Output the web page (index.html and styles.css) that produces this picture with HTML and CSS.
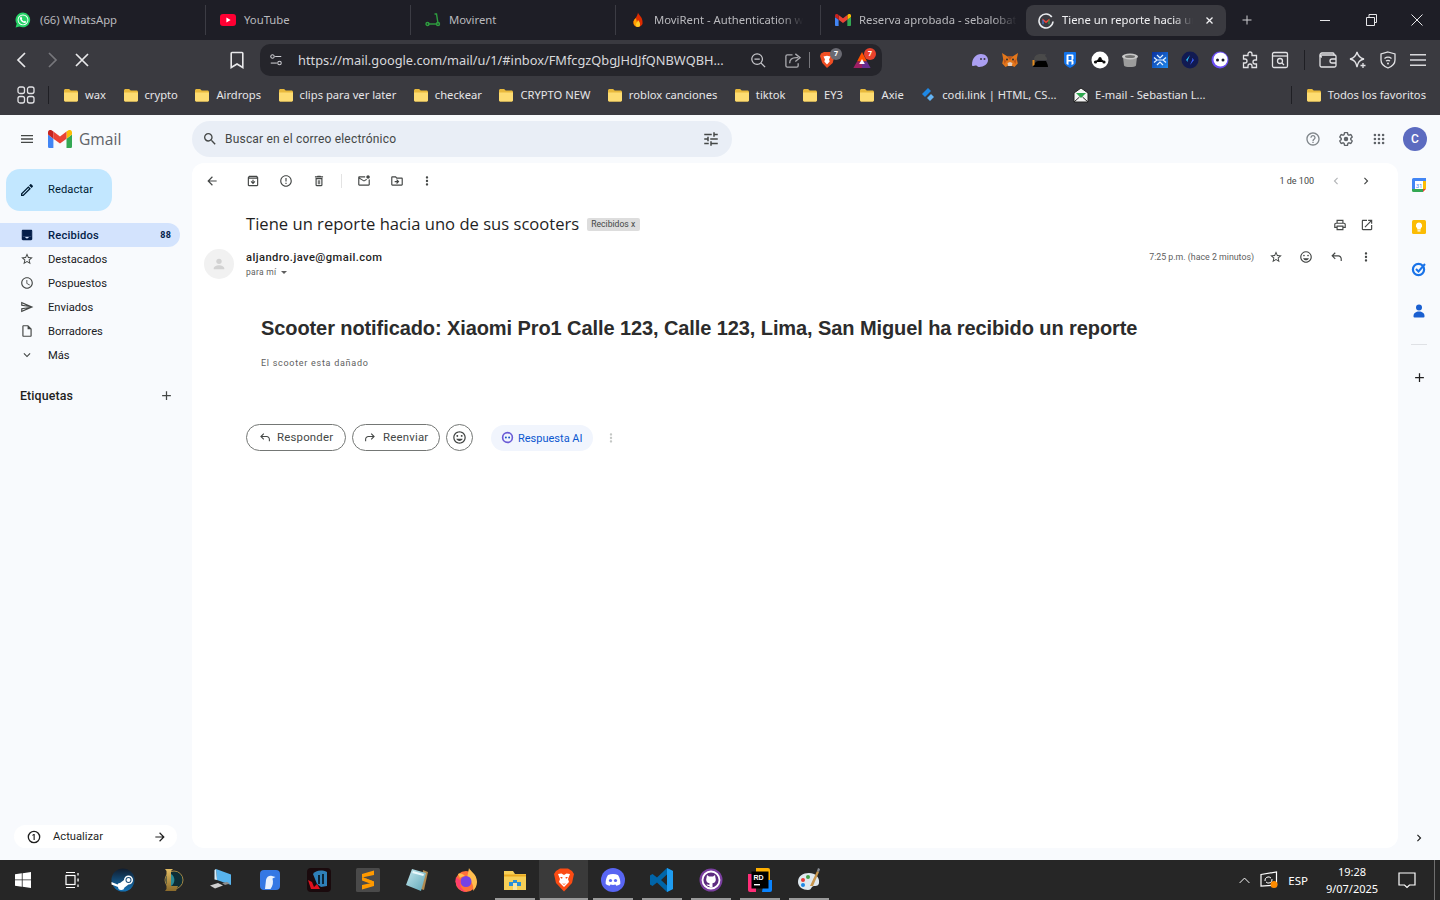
FILE: index.html
```html
<!DOCTYPE html>
<html lang="es">
<head>
    <meta charset="UTF-8">
    <meta name="viewport" content="width=device-width, initial-scale=1.0">
    <title>Tiene un reporte hacia uno de sus scooters - Gmail</title>
    <link rel="stylesheet" href="styles.css">
</head>
<body>
    <svg class="sprite" xmlns="http://www.w3.org/2000/svg">
        <defs>
            <linearGradient id="g-steam" x1="0" y1="0" x2="0" y2="1"><stop offset="0" stop-color="#111d2e"/><stop offset="1" stop-color="#1474b8"/></linearGradient>
            <linearGradient id="g-note" x1="0" y1="0" x2="1" y2="1"><stop offset="0" stop-color="#c5e8ee"/><stop offset="1" stop-color="#5ea7b8"/></linearGradient>
            <linearGradient id="g-blue" x1="0" y1="0" x2="1" y2="1"><stop offset="0" stop-color="#0a2f9c"/><stop offset="1" stop-color="#1f8bf0"/></linearGradient>
            <linearGradient id="g-lol" x1="0" y1="0" x2="0" y2="1"><stop offset="0" stop-color="#e4bd63"/><stop offset="1" stop-color="#8a6a2a"/></linearGradient>
        </defs>
        <symbol id="i-menu" viewBox="0 0 24 24"><path d="M3 18h18v-2H3v2zm0-5h18v-2H3v2zm0-7v2h18V6H3z"/></symbol>
        <symbol id="i-search" viewBox="0 0 24 24"><path d="M15.5 14h-.79l-.28-.27A6.471 6.471 0 0 0 16 9.5 6.5 6.5 0 1 0 9.5 16c1.61 0 3.09-.59 4.23-1.57l.27.28v.79l5 4.99L20.49 19l-4.99-5zm-6 0C7.01 14 5 11.99 5 9.5S7.01 5 9.5 5 14 7.01 14 9.5 11.99 14 9.5 14z"/></symbol>
        <symbol id="i-tune" viewBox="0 0 24 24"><path d="M3 17v2h6v-2H3zM3 5v2h10V5H3zm10 16v-2h8v-2h-8v-2h-2v6h2zM7 9v2H3v2h4v2h2V9H7zm14 4v-2H11v2h10zm-6-4h2V7h4V5h-4V3h-2v6z"/></symbol>
        <symbol id="i-help" viewBox="0 0 24 24"><path d="M11 18h2v-2h-2v2zm1-16C6.48 2 2 6.48 2 12s4.48 10 10 10 10-4.48 10-10S17.52 2 12 2zm0 18c-4.41 0-8-3.59-8-8s3.59-8 8-8 8 3.59 8 8-3.59 8-8 8zm0-14c-2.21 0-4 1.79-4 4h2c0-1.1.9-2 2-2s2 .9 2 2c0 2-3 1.75-3 5h2c0-2.25 3-2.5 3-5 0-2.21-1.79-4-4-4z"/></symbol>
        <symbol id="i-gear" viewBox="0 0 24 24"><path fill="none" stroke="currentColor" stroke-width="2" d="M19.14 12.94c.04-.3.06-.61.06-.94 0-.32-.02-.64-.07-.94l2.03-1.58a.49.49 0 0 0 .12-.61l-1.92-3.32a.488.488 0 0 0-.59-.22l-2.39.96c-.5-.38-1.03-.7-1.62-.94l-.36-2.54a.484.484 0 0 0-.48-.41h-3.84c-.24 0-.43.17-.47.41l-.36 2.54c-.59.24-1.13.57-1.62.94l-2.39-.96c-.22-.08-.47 0-.59.22L2.74 8.87c-.12.21-.08.47.12.61l2.03 1.58c-.05.3-.09.63-.09.94s.02.64.07.94l-2.03 1.58a.49.49 0 0 0-.12.61l1.92 3.32c.12.22.37.29.59.22l2.39-.96c.5.38 1.03.7 1.62.94l.36 2.54c.05.24.24.41.48.41h3.84c.24 0 .44-.17.47-.41l.36-2.54c.59-.24 1.13-.56 1.62-.94l2.39.96c.22.08.47 0 .59-.22l1.92-3.32c.12-.22.07-.47-.12-.61l-2.01-1.58z"/><circle cx="12" cy="12" r="3.4"/></symbol>
        <symbol id="i-apps" viewBox="0 0 24 24"><circle cx="5" cy="5" r="2.2"/><circle cx="12" cy="5" r="2.2"/><circle cx="19" cy="5" r="2.2"/><circle cx="5" cy="12" r="2.2"/><circle cx="12" cy="12" r="2.2"/><circle cx="19" cy="12" r="2.2"/><circle cx="5" cy="19" r="2.2"/><circle cx="12" cy="19" r="2.2"/><circle cx="19" cy="19" r="2.2"/></symbol>
        <symbol id="i-back" viewBox="0 0 24 24"><path d="M20 11H7.83l5.59-5.59L12 4l-8 8 8 8 1.41-1.41L7.83 13H20v-2z"/></symbol>
        <symbol id="i-forward" viewBox="0 0 24 24"><path d="M4 11h12.17l-5.59-5.59L12 4l8 8-8 8-1.41-1.41L16.17 13H4v-2z"/></symbol>
        <symbol id="i-archive" viewBox="0 0 24 24"><path d="M20.54 5.23l-1.39-1.68C18.88 3.21 18.47 3 18 3H6c-.47 0-.88.21-1.16.55L3.46 5.23C3.17 5.57 3 6.02 3 6.5V19c0 1.1.9 2 2 2h14c1.1 0 2-.9 2-2V6.5c0-.48-.17-.93-.46-1.27zM6.24 5h11.52l.83 1H5.42l.82-1zM5 19V8h14v11H5zm11-5.5l-4 4-4-4 1.41-1.41L11 13.67V10h2v3.67l1.59-1.59L16 13.5z"/></symbol>
        <symbol id="i-report" viewBox="0 0 24 24"><path d="M11 15h2v2h-2zm0-8h2v6h-2zm.99-5C6.47 2 2 6.48 2 12s4.47 10 9.99 10C17.52 22 22 17.52 22 12S17.52 2 11.99 2zM12 20c-4.42 0-8-3.58-8-8s3.58-8 8-8 8 3.58 8 8-3.58 8-8 8z"/></symbol>
        <symbol id="i-delete" viewBox="0 0 24 24"><path d="M6 19c0 1.1.9 2 2 2h8c1.1 0 2-.9 2-2V7H6v12zM8 9h8v10H8V9zm7.5-5l-1-1h-5l-1 1H5v2h14V4h-3.500z"/><path d="M10 10.500h1.500v7H10zM12.500 10.500H14v7h-1.500z"/></symbol>
        <symbol id="i-unread" viewBox="0 0 24 24"><path d="M22 8.98V18c0 1.1-.9 2-2 2H4c-1.1 0-2-.9-2-2V6c0-1.1.9-2 2-2h10.1c-.06.32-.1.66-.1 1 0 .34.04.68.1 1H4l8 5 3.67-2.29c.47.43 1.02.76 1.63.98L12 13 4 8v10h16V9.9c.74-.15 1.42-.48 2-.92zM16 5c0 1.66 1.34 3 3 3s3-1.34 3-3-1.34-3-3-3-3 1.34-3 3z"/></symbol>
        <symbol id="i-move" viewBox="0 0 24 24"><path d="M20 6h-8l-2-2H4c-1.11 0-1.99.89-1.99 2L2 18c0 1.11.89 2 2 2h16c1.11 0 2-.89 2-2V8c0-1.11-.89-2-2-2zm0 12H4V6h5.17l2 2H20v10zm-8.01-9l-1.41 1.41L12.16 12H8v2h4.16l-1.59 1.59L11.99 17 16 13.01 11.99 9z"/></symbol>
        <symbol id="i-more" viewBox="0 0 24 24"><path d="M12 8c1.1 0 2-.9 2-2s-.9-2-2-2-2 .9-2 2 .9 2 2 2zm0 2c-1.1 0-2 .9-2 2s.9 2 2 2 2-.9 2-2-.9-2-2-2zm0 6c-1.1 0-2 .9-2 2s.9 2 2 2 2-.9 2-2-.9-2-2-2z"/></symbol>
        <symbol id="i-left" viewBox="0 0 24 24"><path d="M15.41 7.41L14 6l-6 6 6 6 1.41-1.41L10.83 12z"/></symbol>
        <symbol id="i-right" viewBox="0 0 24 24"><path d="M10 6L8.59 7.41 13.17 12l-4.58 4.59L10 18l6-6z"/></symbol>
        <symbol id="i-print" viewBox="0 0 24 24"><path d="M19 8h-1V3H6v5H5c-1.66 0-3 1.34-3 3v6h4v4h12v-4h4v-6c0-1.66-1.34-3-3-3zM8 5h8v3H8V5zm8 12v2H8v-4h8v2zm2-2v-2H6v2H4v-4c0-.55.45-1 1-1h14c.55 0 1 .45 1 1v4h-2z"/></symbol>
        <symbol id="i-open" viewBox="0 0 24 24"><path d="M19 19H5V5h7V3H5c-1.11 0-2 .9-2 2v14c0 1.1.89 2 2 2h14c1.1 0 2-.9 2-2v-7h-2v7zM14 3v2h3.59l-9.83 9.83 1.41 1.41L19 6.41V10h2V3h-7z"/></symbol>
        <symbol id="i-star" viewBox="0 0 24 24"><path d="M22 9.24l-7.19-.62L12 2 9.19 8.63 2 9.24l5.46 4.73L5.82 21 12 17.27 18.18 21l-1.63-7.03L22 9.24zM12 15.4l-3.76 2.27 1-4.28-3.32-2.88 4.38-.38L12 6.1l1.71 4.04 4.38.38-3.32 2.88 1 4.28L12 15.4z"/></symbol>
        <symbol id="i-emoji" viewBox="0 0 24 24"><path d="M11.99 2C6.47 2 2 6.48 2 12s4.47 10 9.99 10C17.52 22 22 17.52 22 12S17.52 2 11.99 2zM12 20c-4.42 0-8-3.58-8-8s3.58-8 8-8 8 3.58 8 8-3.58 8-8 8zm3.5-9c.83 0 1.5-.67 1.5-1.5S16.33 8 15.5 8 14 8.67 14 9.5s.67 1.5 1.5 1.5zm-7 0c.83 0 1.5-.67 1.5-1.5S9.33 8 8.5 8 7 8.67 7 9.5 7.67 11 8.5 11zm3.5 6.5c2.33 0 4.31-1.46 5.11-3.5H6.89c.8 2.04 2.78 3.5 5.11 3.5z"/></symbol>
        <symbol id="i-reply" viewBox="0 0 24 24"><path d="M20 19v-4c0-2.21-1.79-4-4-4H7.83l3.59 3.59L10 16l-6-6 6-6 1.41 1.41L7.83 9H16c3.31 0 6 2.69 6 6v4h-2z"/></symbol>
        <symbol id="i-fwd" viewBox="0 0 24 24"><path d="M4 19v-4c0-2.21 1.79-4 4-4h8.17l-3.59 3.59L14 16l6-6-6-6-1.41 1.41L16.17 9H8c-3.31 0-6 2.69-6 6v4h2z"/></symbol>
        <symbol id="i-inbox" viewBox="0 0 24 24"><path d="M19 3H5c-1.1 0-2 .9-2 2v14c0 1.1.9 2 2 2h14c1.1 0 2-.9 2-2V5c0-1.1-.9-2-2-2zm0 12h-4c0 1.66-1.35 3-3 3s-3-1.34-3-3H5V5h14v10z"/><rect x="5" y="5" width="14" height="10"/></symbol>
        <symbol id="i-clock" viewBox="0 0 24 24"><path d="M11.99 2C6.47 2 2 6.48 2 12s4.47 10 9.99 10C17.52 22 22 17.52 22 12S17.52 2 11.99 2zM12 20c-4.42 0-8-3.58-8-8s3.58-8 8-8 8 3.58 8 8-3.58 8-8 8zm.5-13H11v6l5.25 3.15.75-1.23-4.5-2.67z"/></symbol>
        <symbol id="i-send" viewBox="0 0 24 24"><path d="M4.01 6.03l7.51 3.22-7.52-1 .01-2.22m7.5 8.72L4 17.97v-2.22l7.51-1M2.01 3L2 10l15 2-15 2 .01 7L23 12 2.01 3z"/></symbol>
        <symbol id="i-draft" viewBox="0 0 24 24"><path d="M14 2H6c-1.1 0-1.99.9-1.99 2L4 20c0 1.1.89 2 1.99 2H18c1.1 0 2-.9 2-2V8l-6-6zM6 20V4h7v5h5v11H6z"/></symbol>
        <symbol id="i-expand" viewBox="0 0 24 24"><path d="M16.59 8.59L12 13.17 7.41 8.59 6 10l6 6 6-6z"/></symbol>
        <symbol id="i-add" viewBox="0 0 24 24"><path d="M19 13h-6v6h-2v-6H5v-2h6V5h2v6h6v2z"/></symbol>
        <symbol id="i-edit" viewBox="0 0 24 24"><path d="M3 17.25V21h3.75L17.81 9.94l-3.75-3.75L3 17.25zM5.92 19H5v-.92l9.06-9.06.92.92L5.92 19zM20.71 5.63l-2.34-2.34c-.39-.39-1.02-.39-1.41 0l-1.83 1.83 3.75 3.75 1.83-1.83c.39-.39.39-1.02 0-1.41z"/></symbol>
        <symbol id="i-gmail" viewBox="0 0 24 18"><path fill="#4285f4" d="M1.6 18h3.8V8.7L0 4.6v11.8C0 17.3.7 18 1.6 18z"/><path fill="#34a853" d="M18.5 18h3.9c.9 0 1.6-.7 1.6-1.6V4.6l-5.5 4.1z"/><path fill="#fbbc04" d="M18.5 1.6v7.1L24 4.6V2.4c0-2-2.3-3.2-3.9-2z"/><path fill="#ea4335" d="M5.4 8.7V1.6L12 6.5l6.5-5v7.2L12 13.6z"/><path fill="#c5221f" d="M0 2.4v2.2l5.4 4.1V1.6L3.9.4C2.3-.8 0 .4 0 2.4z"/></symbol>
        <symbol id="i-folder" viewBox="0 0 16 16"><path fill="#e8b93c" d="M1 3.500C1 2.700 1.700 2 2.500 2h3.600l1.600 1.600h5.800c.8 0 1.500.7 1.500 1.500V13c0 .8-.7 1.500-1.500 1.500h-11C1.700 14.500 1 13.800 1 13z"/><path fill="#fddc72" d="M1 5.500h14V13c0 .8-.7 1.500-1.500 1.500h-11C1.700 14.500 1 13.800 1 13z"/></symbol>
    </svg>

    <!-- pestañas del navegador -->
    <div class="tabstrip">
        <div class="tab">
            <svg class="tab-icon" viewBox="0 0 16 16"><path fill="#25d366" d="M8 .5a7.400 7.400 0 0 0-6.300 11.300L.6 15.500l3.800-1A7.400 7.400 0 1 0 8 .5z"/><circle cx="8" cy="7.900" r="5.400" fill="#fff"/><circle cx="8" cy="7.900" r="4.500" fill="#25d366"/><path fill="#fff" d="M6 4.800c.4 0 .6.100.7.400l.5 1.200-.5.800c.5 1 1.300 1.700 2.300 2.200l.8-.6 1.200.6c.2.100.2.400.1.800-.3.600-1 .9-1.600.8-2.300-.4-4-2.100-4.500-4.300-.1-.9.300-1.800 1-1.900z"/></svg>
            <span class="tab-title">(66) WhatsApp</span>
        </div>
        <div class="tab">
            <svg class="tab-icon" viewBox="0 0 16 16"><rect y="2" width="16" height="12" rx="3" fill="#ff0033"/><path fill="#fff" d="M6.400 5.500 10.600 8l-4.200 2.500z"/></svg>
            <span class="tab-title">YouTube</span>
        </div>
        <div class="tab">
            <svg class="tab-icon" viewBox="0 0 16 16"><g fill="none" stroke="#2e9e3f" stroke-width="1.400"><path d="M9.500 2h2l1.500 9.500"/><path d="M3 12h8"/><circle cx="2.500" cy="12" r="1.500"/><circle cx="13" cy="12" r="1.500"/></g></svg>
            <span class="tab-title">Movirent</span>
        </div>
        <div class="tab">
            <svg class="tab-icon" viewBox="0 0 16 16"><path fill="#dd2c00" d="M8 .5c.5 2.500 4.500 4.500 4.500 9A4.500 4.500 0 0 1 8 15a4.500 4.500 0 0 1-4.500-5.500C3.800 7.500 7.500 5 8 .5z"/><path fill="#ffa000" d="M3.600 9.200C4 7.800 5 6.800 6 6l2 9a4.400 4.400 0 0 1-4.500-4.500z"/><path fill="#ffca28" d="M8 8c1 1.500 2.200 2.600 2 4.300A2.200 2.200 0 0 1 8 15a2.300 2.300 0 0 1-2-2.700C6.200 10.800 7.500 9.800 8 8z"/></svg>
            <span class="tab-title tab-fade">MoviRent - Authentication w</span>
        </div>
        <div class="tab">
            <svg class="tab-icon tab-icon-m"><use href="#i-gmail"/></svg>
            <span class="tab-title tab-fade">Reserva aprobada - sebalobat</span>
        </div>
        <div class="tab tab-active">
            <svg class="tab-icon" viewBox="0 0 16 16"><path fill="none" stroke="#e8eaed" stroke-width="1.600" d="M13.800 4A7 7 0 1 0 15 8.500"/><path fill="#ea4335" d="M4.500 5.500 8 8.200l3.500-2.700v2L8 10.200 4.500 7.500z"/><path fill="#4285f4" d="M4.500 6.500l1 .8v3.900h-1z"/><path fill="#34a853" d="M10.500 7.300l1-.8v4.700h-1z"/></svg>
            <span class="tab-title tab-fade">Tiene un reporte hacia ur</span>
            <svg class="tab-close" viewBox="0 0 24 24"><path fill="none" stroke="currentColor" stroke-width="3.500" d="M4 4l16 16M20 4 4 20"/></svg>
        </div>
        <svg class="new-tab" viewBox="0 0 24 24"><path fill="none" stroke="currentColor" stroke-width="2" d="M12 3v18M3 12h18"/></svg>
        <div class="win-controls">
            <svg class="win-btn" viewBox="0 0 16 16"><path fill="none" stroke="currentColor" d="M3 8.500h10"/></svg>
            <svg class="win-btn" viewBox="0 0 16 16"><path fill="none" stroke="currentColor" d="M3.500 5.500h8v8h-8zM6 5.500v-3h7.500v8h-2"/></svg>
            <svg class="win-btn" viewBox="0 0 16 16"><path fill="none" stroke="currentColor" d="M2.500 2.500l11 11M13.500 2.500l-11 11"/></svg>
        </div>
    </div>

    <!-- barra de dirección -->
    <div class="toolbar">
        <svg class="nav-btn" viewBox="0 0 20 20"><path fill="none" stroke="#e8e8ea" stroke-width="1.700" d="M13 3 6 10l7 7"/></svg>
        <svg class="nav-btn" viewBox="0 0 20 20"><path fill="none" stroke="#77777c" stroke-width="1.700" d="M7 3l7 7-7 7"/></svg>
        <svg class="nav-btn" viewBox="0 0 20 20"><path fill="none" stroke="#e8e8ea" stroke-width="1.700" d="M4 4l12 12M16 4 4 16"/></svg>
        <svg class="nav-btn bookmark-btn" viewBox="0 0 20 20"><path fill="none" stroke="#e8e8ea" stroke-width="1.600" d="M5 2.500h10a.8.8 0 0 1 .8.8v14.200L10 14l-5.800 3.500V3.300a.8.8 0 0 1 .8-.8z"/></svg>
        <div class="urlbar">
            <svg class="url-tune" viewBox="0 0 16 16"><g fill="none" stroke="#cfcfd4" stroke-width="1.200"><circle cx="4" cy="4" r="2"/><path d="M7 4h7"/><circle cx="12" cy="11.500" r="2"/><path d="M2 11.500h7"/></g></svg>
            <span class="url-text">https://mail.google.com/mail/u/1/#inbox/FMfcgzQbgJHdJfQNBWQBH...</span>
            <svg class="url-zoom" viewBox="0 0 18 18"><g fill="none" stroke="#c6c6cb" stroke-width="1.400"><circle cx="8" cy="8" r="6"/><path d="M12.500 12.500 17 17M5 8h6"/></g></svg>
            <svg class="url-share" viewBox="0 0 18 18"><g fill="none" stroke="#a9a9ae" stroke-width="1.400"><path d="M9 3H3.500A1.500 1.500 0 0 0 2 4.500v10A1.500 1.500 0 0 0 3.500 16h10a1.500 1.500 0 0 0 1.500-1.500V12"/><path d="M6 12c0-4 3-6 7-6h2M12 2l5 4-5 4"/></g></svg>
            <span class="url-sep"></span>
            <span class="shield-wrap">
                <svg class="shield" viewBox="0 0 16 18"><path fill="#f04e23" d="M2 2.500 5 1h6l3 1.500 1.500 2.500-1.800 7L8 17l-4.700-5L1 5z"/><path fill="#fff" d="M4.500 5.500 8 4.800l3.500.7-1.500 3 .7 2L8 13.500l-2.700-3 .7-2z"/></svg>
                <span class="ext-badge badge-gray">7</span>
            </span>
            <span class="shield-wrap shield-wrap-last">
                <svg class="shield" viewBox="0 0 18 18"><path fill="#ff5000" d="M9 1 14 10.500H4z"/><path fill="#9e1f63" d="M4 10.500H9V17H.4z"/><path fill="#662d91" d="M14 10.500H9V17h8.600z"/><path fill="#fff" d="M9 8l2.800 5H6.200z"/></svg>
                <span class="ext-badge badge-red">7</span>
            </span>
        </div>
        <div class="extensions">
            <svg class="ext" viewBox="0 0 18 18"><path fill="#ab9ff2" d="M1 14C1 7 5 3 10 3c4.500 0 7 3 7 6 0 4-4 7-9 7-2 0-1.500-2-3.500-1.500C3 15 1 15.500 1 14z"/><circle cx="10" cy="8" r="1" fill="#3a3a40"/><circle cx="13.500" cy="8" r="1" fill="#3a3a40"/></svg>
            <svg class="ext" viewBox="0 0 18 18"><path fill="#e2761b" d="M1 2l5.500 3.500h5L17 2l-1.200 6 1 4.500L13.500 16l-2-1h-5l-2 1-3.300-3.500 1-4.500z"/><path fill="#c0561a" d="M6.500 5.500 9 9l2.500-3.500zM2.500 8l3 2-2 3zM15.500 8l-3 2 2 3z"/><path fill="#e4cdbd" d="M6.500 12 9 11l2.500 1-.7 3H7.200z"/><circle cx="6" cy="8.500" r="1" fill="#2f2f33"/><circle cx="12" cy="8.500" r="1" fill="#2f2f33"/></svg>
            <svg class="ext" viewBox="0 0 18 18"><path fill="#4a4a4a" d="M3 9c0-4 3-6 6-6 2 0 4 .5 6 0l-1 2c2 1 2 3 2 4z"/><path fill="#000" d="M2 16c1-3 3-6 5-6l8 0c1 2 2 4 2 6z"/><path fill="#e08a1e" d="M1.500 9h2v5l-2 1z"/></svg>
            <svg class="ext" viewBox="0 0 18 18"><path fill="#1273ea" d="M4 1h10a1 1 0 0 1 1 1v9c0 2-2 4-6 6-4-2-6-4-6-6V2a1 1 0 0 1 1-1z"/><path fill="#fff" d="M6.500 3.500h5a1 1 0 0 1 1 1V8l-1 1 1 1v3l-2 1v-3.500h-3V14l-2-1V4.500a1 1 0 0 1 1-1zm1 1.500v1.500V9h3V5z"/></svg>
            <svg class="ext" viewBox="0 0 18 18"><circle cx="9" cy="9" r="8.500" fill="#fff"/><circle cx="4.500" cy="11" r="1.600" fill="#111"/><circle cx="9" cy="7.500" r="1.600" fill="#111"/><circle cx="13" cy="11" r="1.600" fill="#111"/><path stroke="#111" stroke-width="1.200" d="M4.500 11 9 7.500 13 11"/></svg>
            <svg class="ext" viewBox="0 0 18 18"><path fill="#9c9c9c" d="M2 6c2 2 12 2 14 0l-1 8.500c-1 2-11 2-12 0z"/><ellipse cx="9" cy="5.500" rx="8" ry="3" fill="#c8c8c8"/><ellipse cx="9" cy="5.500" rx="5" ry="1.500" fill="#707070"/></svg>
            <svg class="ext" viewBox="0 0 18 18"><rect x="1" y="1" width="16" height="16" fill="url(#g-blue)"/><path fill="none" stroke="#e3f2ff" stroke-width="1.200" d="M6 4l3 3 3-3M6 14l3-3 3 3M3 6.500l3 2.500-3 2.500M15 6.500 12 9l3 2.500M6 9h6"/></svg>
            <svg class="ext" viewBox="0 0 18 18"><circle cx="9" cy="9" r="8.500" fill="#111a52"/><path fill="#27c4f5" d="M9 4 5 9l2 2-1 0z"/><path fill="#3e63ff" d="M9 14l4-5-2-2 1 0z"/><path fill="#111a52" d="M9 7l2 2-2 2-2-2z"/></svg>
            <svg class="ext" viewBox="0 0 18 18"><circle cx="9" cy="9" r="8.500" fill="#6a4df5"/><circle cx="9.500" cy="8.500" r="7" fill="#fff"/><circle cx="6.500" cy="9" r="1.500" fill="#1a1a2e"/><circle cx="12" cy="9" r="1.500" fill="#1a1a2e"/></svg>
            <svg class="ext" viewBox="0 0 18 18"><path fill="none" stroke="#e2e2e5" stroke-width="1.300" d="M7 3a2 2 0 0 1 4 0v1.500h4.500V9H14a2 2 0 0 0 0 4h1.500v3.500H11V15a2 2 0 0 0-4 0v1.500H2.500V12H4a2 2 0 0 0 0-4H2.500V4.500H7z"/></svg>
            <svg class="ext" viewBox="0 0 18 18"><g fill="none" stroke="#e2e2e5" stroke-width="1.300"><rect x="1.500" y="1.500" width="15" height="15" rx="1.500"/><path d="M1.500 5h15"/><circle cx="9" cy="10" r="2.500"/><path d="M11 12l2 2"/></g></svg>
            <span class="toolbar-sep"></span>
            <svg class="ext" viewBox="0 0 18 18"><g fill="none" stroke="#e2e2e5" stroke-width="1.300"><path d="M15 4.500V3a1 1 0 0 0-1-1H3a2 2 0 0 0 0 4"/><rect x="1" y="4" width="16" height="12" rx="1.500"/><path d="M17 8h-4a2 2 0 0 0 0 4h4"/></g></svg>
            <svg class="ext" viewBox="0 0 18 18"><g fill="none" stroke="#e2e2e5" stroke-width="1.300"><path d="M8 1c1 4 2.500 6 7 7-4.500 1-6 3-7 8-1-5-2.500-7-7-8 4.500-1 6-3 7-7z"/><path d="M14 12v5M11.500 14.500h5"/></g></svg>
            <svg class="ext" viewBox="0 0 18 18"><g fill="none" stroke="#e2e2e5" stroke-width="1.300"><path d="M9 1l7 2v6c0 4-3 6.500-7 8-4-1.500-7-4-7-8V3z"/><path d="M5.500 7.500c2-1.500 5-1.500 7 0M7 10c1-.7 3-.7 4 0"/></g><circle cx="9" cy="12.500" r="1" fill="#e2e2e5"/></svg>
            <svg class="ext" viewBox="0 0 18 18"><path fill="#d8d8db" d="M1 3h16v1.500H1zM1 8.200h16v1.500H1zM1 13.500h16V15H1z"/></svg>
        </div>
    </div>

    <!-- marcadores -->
    <div class="bookmarks">
        <svg class="bm-apps" viewBox="0 0 18 18"><g fill="none" stroke="#e2e2e5" stroke-width="1.300"><rect x="1" y="1" width="6.500" height="6.500" rx="2"/><rect x="10.500" y="1" width="6.500" height="6.500" rx="2"/><rect x="1" y="10.500" width="6.500" height="6.500" rx="2"/><rect x="10.500" y="10.500" width="6.500" height="6.500" rx="2"/></g></svg>
        <span class="bm-sep"></span>
        <span class="bm"><svg class="bm-icon"><use href="#i-folder"/></svg>wax</span>
        <span class="bm"><svg class="bm-icon"><use href="#i-folder"/></svg>crypto</span>
        <span class="bm"><svg class="bm-icon"><use href="#i-folder"/></svg>Airdrops</span>
        <span class="bm"><svg class="bm-icon"><use href="#i-folder"/></svg>clips para ver later</span>
        <span class="bm"><svg class="bm-icon"><use href="#i-folder"/></svg>checkear</span>
        <span class="bm"><svg class="bm-icon"><use href="#i-folder"/></svg>CRYPTO NEW</span>
        <span class="bm"><svg class="bm-icon"><use href="#i-folder"/></svg>roblox canciones</span>
        <span class="bm"><svg class="bm-icon"><use href="#i-folder"/></svg>tiktok</span>
        <span class="bm"><svg class="bm-icon"><use href="#i-folder"/></svg>EY3</span>
        <span class="bm"><svg class="bm-icon"><use href="#i-folder"/></svg>Axie</span>
        <span class="bm"><svg class="bm-icon" viewBox="0 0 16 16"><path fill="#1e88e5" d="M8 1l3 3-6 6-3-3z"/><path fill="#64b5f6" d="M11 7l3 3-4 4-3-3z"/></svg>codi.link | HTML, CS...</span>
        <span class="bm"><svg class="bm-icon" viewBox="0 0 16 16"><path fill="#f4f4f4" stroke="#222" d="M1 6l7-5 7 5v9H1z"/><path fill="#2ea84f" d="M3 6h10l-5 5z"/><path fill="none" stroke="#222" d="M1 15l5.500-5M15 15 9.500 10"/></svg>E-mail - Sebastian L...</span>
        <span class="bm-sep bm-sep-right"></span>
        <span class="bm"><svg class="bm-icon"><use href="#i-folder"/></svg>Todos los favoritos</span>
    </div>

    <!-- gmail -->
    <div class="gmail">
        <header class="gm-top">
            <div class="gm-brand">
                <svg class="ic ic-menu"><use href="#i-menu"/></svg>
                <svg class="gm-logo"><use href="#i-gmail"/></svg>
                <span class="gm-word">Gmail</span>
            </div>
            <div class="gm-search">
                <svg class="ic ic-search"><use href="#i-search"/></svg>
                <span class="gm-search-text">Buscar en el correo electrónico</span>
                <svg class="ic ic-tune"><use href="#i-tune"/></svg>
            </div>
            <div class="gm-account">
                <svg class="ic ic-help"><use href="#i-help"/></svg>
                <svg class="ic ic-gear"><use href="#i-gear"/></svg>
                <svg class="ic ic-apps"><use href="#i-apps"/></svg>
                <span class="avatar">C</span>
            </div>
        </header>

        <div class="gm-body">
            <aside class="sidebar">
                <div class="compose"><svg class="ic ic-edit"><use href="#i-edit"/></svg><span>Redactar</span></div>
                <nav class="nav">
                    <div class="nav-item nav-active"><svg class="ic"><use href="#i-inbox"/></svg><span class="nav-label">Recibidos</span><span class="nav-count">88</span></div>
                    <div class="nav-item"><svg class="ic"><use href="#i-star"/></svg><span class="nav-label">Destacados</span></div>
                    <div class="nav-item"><svg class="ic"><use href="#i-clock"/></svg><span class="nav-label">Pospuestos</span></div>
                    <div class="nav-item"><svg class="ic"><use href="#i-send"/></svg><span class="nav-label">Enviados</span></div>
                    <div class="nav-item"><svg class="ic"><use href="#i-draft"/></svg><span class="nav-label">Borradores</span></div>
                    <div class="nav-item"><svg class="ic"><use href="#i-expand"/></svg><span class="nav-label">Más</span></div>
                </nav>
                <div class="labels-head"><span>Etiquetas</span><svg class="ic"><use href="#i-add"/></svg></div>
                <div class="update-pill">
                    <svg class="update-num" viewBox="0 0 16 16"><circle cx="8" cy="8" r="6.500" fill="none" stroke="#1f1f1f" stroke-width="1.500"/><path fill="#1f1f1f" d="M7.500 4.500h1.300v7H7.500V6l-1.500.6v-1z"/></svg>
                    <span class="update-text">Actualizar</span>
                    <svg class="ic update-arrow"><use href="#i-forward"/></svg>
                </div>
            </aside>

            <main class="card">
                <div class="mail-toolbar">
                    <svg class="tool tool-back"><use href="#i-back"/></svg>
                    <svg class="tool tool-first"><use href="#i-archive"/></svg>
                    <svg class="tool"><use href="#i-report"/></svg>
                    <svg class="tool"><use href="#i-delete"/></svg>
                    <span class="tool-sep"></span>
                    <svg class="tool tool-after-sep"><use href="#i-unread"/></svg>
                    <svg class="tool"><use href="#i-move"/></svg>
                    <svg class="tool tool-more"><use href="#i-more"/></svg>
                    <span class="pager">1 de 100</span>
                    <svg class="tool tool-dim"><use href="#i-left"/></svg>
                    <svg class="tool"><use href="#i-right"/></svg>
                </div>

                <div class="subject-row">
                    <h2 class="subject">Tiene un reporte hacia uno de sus scooters</h2>
                    <span class="label-chip">Recibidos <b>x</b></span>
                    <svg class="tool tool-print"><use href="#i-print"/></svg>
                    <svg class="tool tool-open"><use href="#i-open"/></svg>
                </div>

                <div class="msg-head">
                    <div class="msg-avatar"><svg viewBox="0 0 24 24"><circle cx="12" cy="8" r="4"/><path d="M4 19c0-3 4-5 8-5s8 2 8 5v1H4z"/></svg></div>
                    <div class="msg-from">
                        <div class="msg-name">aljandro.jave@gmail.com</div>
                        <div class="msg-to">para mí <i class="caret"></i></div>
                    </div>
                    <span class="msg-time">7:25 p.m. (hace 2 minutos)</span>
                    <svg class="tool"><use href="#i-star"/></svg>
                    <svg class="tool"><use href="#i-emoji"/></svg>
                    <svg class="tool"><use href="#i-reply"/></svg>
                    <svg class="tool"><use href="#i-more"/></svg>
                </div>

                <h1 class="msg-title">Scooter notificado: Xiaomi Pro1 Calle 123, Calle 123, Lima, San Miguel ha recibido un reporte</h1>
                <p class="msg-body">El scooter esta dañado</p>

                <div class="actions">
                    <span class="act-btn act-reply"><svg class="ic"><use href="#i-reply"/></svg>Responder</span>
                    <span class="act-btn act-forward"><svg class="ic"><use href="#i-fwd"/></svg>Reenviar</span>
                    <span class="act-emoji"><svg class="ic"><use href="#i-emoji"/></svg></span>
                    <span class="act-ai">
                        <svg class="ai-icon" viewBox="0 0 16 16"><circle cx="8" cy="8" r="6" fill="none" stroke="#6a5bd6" stroke-width="2"/><circle cx="6" cy="8" r="1.200" fill="#1a56c4"/><circle cx="10" cy="8" r="1.200" fill="#1a56c4"/></svg>
                        <span>Respuesta AI</span>
                    </span>
                    <svg class="ic act-more"><use href="#i-more"/></svg>
                </div>
            </main>

            <aside class="rail">
                <svg class="rail-app" viewBox="0 0 16 16"><rect x="1" y="1" width="14" height="14" rx="1.500" fill="#fff"/><path fill="#4285f4" d="M1 2.500A1.500 1.500 0 0 1 2.500 1H15v3H4v8H1z"/><path fill="#34a853" d="M1 12h11v3H2.500A1.500 1.500 0 0 1 1 13.500z"/><path fill="#fbbc04" d="M12 4h3v8h-3z"/><path fill="#ea4335" d="M12 12h3l-3 3z"/><text class="rail-cal" x="8" y="10.600" text-anchor="middle">31</text></svg>
                <svg class="rail-app" viewBox="0 0 16 16"><rect x="1" y="1" width="14" height="14" rx="1.500" fill="#fbbc04"/><path fill="#fff" d="M8 3.500a3.200 3.200 0 0 0-1.800 5.800V10.500h3.600V9.300A3.200 3.200 0 0 0 8 3.500zM6.500 11.300h3V12.500h-3z"/></svg>
                <svg class="rail-app" viewBox="0 0 16 16"><circle cx="7.500" cy="8.500" r="5.600" fill="none" stroke="#1a73e8" stroke-width="2.200"/><path fill="none" stroke="#1a73e8" stroke-width="2" d="M5 8l2.500 2.500L14 3"/></svg>
                <svg class="rail-app" viewBox="0 0 16 16"><circle cx="8" cy="4.500" r="3" fill="#1a5fd0"/><path fill="#1a5fd0" d="M2.500 13c0-3 2.500-4.500 5.500-4.500s5.500 1.500 5.500 4.500v.5a1 1 0 0 1-1 1h-9a1 1 0 0 1-1-1z"/></svg>
                <span class="rail-sep"></span>
                <svg class="ic rail-add"><use href="#i-add"/></svg>
                <svg class="ic rail-toggle"><use href="#i-right"/></svg>
            </aside>
        </div>
    </div>

    <!-- barra de tareas -->
    <footer class="taskbar">
        <svg class="win-logo" viewBox="0 0 16 16"><path fill="#fff" d="M0 2.300 6.800 1.300v6.200H0zM7.600 1.200 16 0v7.500H7.600zM0 8.300h6.800v6.400L0 13.700zM7.600 8.300H16V16l-8.400-1.200z"/></svg>
        <svg class="task-view" viewBox="0 0 18 18"><g fill="none" stroke="#fff" stroke-width="1.200"><path d="M3 1.500h9M3 16.500h9"/><rect x="3" y="4.500" width="9" height="9"/><path d="M15 2v2.500M15 13.500V16"/></g><rect x="14.400" y="7.500" width="1.300" height="3" fill="#fff"/></svg>
        <div class="task-apps">
            <span class="task"><svg viewBox="0 0 24 24"><circle cx="12" cy="12" r="11.500" fill="url(#g-steam)"/><path fill="#fff" d="M.5 14l6 2.500a3 3 0 0 1 2.500-1.400l4-3.100a4.500 4.500 0 1 1 4.500 4.500l-4 3a3.300 3.300 0 0 1-6.500-.5L.5 16.500z"/><circle cx="17.500" cy="12" r="3" fill="#1a4c78"/><circle cx="17.500" cy="12" r="2" fill="#fff"/></svg></span>
            <span class="task"><svg viewBox="0 0 24 24"><circle cx="14" cy="12" r="9" fill="#0e2e36" stroke="#a08544"/><path fill="#2a8a96" d="M11 6a7 7 0 0 1 0 12z"/><path fill="url(#g-lol)" d="M5 1h8l-2 2v15h7l-2 5H5l1.500-2V3z"/></svg></span>
            <span class="task"><svg viewBox="0 0 24 24"><path fill="#58b4ee" d="M7 1l15 5.500V17L8 12z"/><path fill="#d7eefb" d="M7 1 5.500 2v9.500L8 12z"/><path fill="#cfcfcf" d="M1 17.500l8-2.500 5 2.500-8 3z"/><path fill="#8d8d8d" d="M13 15l5-1 3 1.500-5 1.500z"/></svg></span>
            <span class="task"><svg viewBox="0 0 24 24"><rect x="2" y="2" width="20" height="20" rx="4" fill="#3478e4"/><path fill="#e8f1fd" d="M7 21l1-9c.5-3.500 4-5 6-4l3.500 1-3 1.500c1 3.500.5 7.500-2 10.500z"/></svg></span>
            <span class="task"><svg viewBox="0 0 24 24"><rect y="0" width="24" height="24" rx="4" fill="#1a0a0d"/><path fill="#2f7fb8" d="M6 6c2-3 8-5 14-2v14l-6 1-4-3z"/><path fill="#0c2437" d="M11 7h2v9h-2zM15 6h2v10h-2z"/><path fill="#e0101e" d="M1 12l4 2 2 5 3-3 3 5H4z"/></svg></span>
            <span class="task"><svg viewBox="0 0 24 24"><rect width="24" height="24" rx="1.500" fill="#4a4a4a"/><path fill="#ff9a00" d="M6 9.500V6l12-3.500V7zM18 14.500V18L6 21.500V17zM6 9.500 18 14v-.5L6 9z"/><path fill="#ff9a00" d="M6 9l12 4.500V17L6 12.500z"/></svg></span>
            <span class="task"><svg viewBox="0 0 24 24"><path fill="#b08a50" d="M18 2l5 2-4 18-3-1z"/><path fill="url(#g-note)" d="M7 1l14 4-5 18L1 17z"/><path fill="#eaf8fb" d="M8 3l11 3-.7 2L7.300 5z"/></svg></span>
            <span class="task"><svg viewBox="0 0 24 24"><circle cx="12" cy="13.500" r="10.500" fill="#ff7139"/><path fill="#ffbd4f" d="M15 0c1 3 8 6 8 14 0 4-2 7-4 9 1-5-1-10-6-13z"/><circle cx="12" cy="13.500" r="5.500" fill="#7542e5"/><path fill="#ff3e6c" d="M2 9c-2 7 3 15 11 15-5-2-8-6-6-11z"/><path fill="#ffbd4f" d="M4 6c3-1 5 0 7 2-2 0-4 1-5 2z"/></svg></span>
            <span class="task"><svg viewBox="0 0 24 24"><path fill="#f6cf57" d="M1 3h9l2 3h11v16H1z"/><path fill="#e8a820" d="M1 6.500h22v2H1z"/><path fill="#2a8fd8" d="M6 18v-4h4v-2h4v2h4v4z"/><path fill="#f6e5a8" d="M10 15h4v7h-4z"/></svg></span>
            <span class="task task-active"><svg viewBox="0 0 24 24"><path fill="#fb4b13" d="M4 3l4-2.500h8L20 3l2 3-2 9-8 8.500L4 15 2 6z"/><path fill="#fff" d="M6 6l3.500-.5L12 7l2.500-1.500L18 6l-2 5 1 3-5 5-5-5 1-3z"/><path fill="#fb4b13" d="M8 9h2.500l-.5 2zM16 9h-2.500l.5 2zM10 15l2 1 2-1-2 2z"/></svg></span>
            <span class="task"><svg viewBox="0 0 24 24"><circle cx="12" cy="12" r="12" fill="#5865f2"/><path fill="#fff" d="M7 7c3-1.500 7-1.500 10 0 2 3 2.500 6 2.300 9-1.500 1-3 1.500-4 1.800l-.8-1.300c-2 .5-3 .5-5 0l-.8 1.300c-1-.3-2.500-.8-4-1.800C4.500 13 5 10 7 7z"/><circle cx="9.500" cy="12.500" r="1.600" fill="#5865f2"/><circle cx="14.500" cy="12.500" r="1.600" fill="#5865f2"/></svg></span>
            <span class="task"><svg viewBox="0 0 24 24"><path fill="#0065a9" d="M17 0l6 3v18l-6 3-10-9.500-4.500 3.500L0 16.500V7.500L2.500 6 7 9.500zM17 6.500 11 12l6 5.500z"/><path fill="#1f9cf0" d="M17 0l6 3v18l-6 3z"/></svg></span>
            <span class="task"><svg viewBox="0 0 24 24"><circle cx="12" cy="12" r="11.500" fill="#7b3fa0"/><circle cx="12" cy="12" r="8.500" fill="#5e2c80" stroke="#fff" stroke-width="1.800"/><path fill="#fff" d="M8 7l2 1.500h4L16 7l.5 3c1 2.500-.5 5-3 5.200v4.300h-3V18c-1.500.3-2.500-.2-3-1.700 1 .2 1.500.7 3 .5v-1.600C8 15 6.500 12.500 7.500 10z"/></svg></span>
            <span class="task"><svg viewBox="0 0 24 24"><path fill="#ff2d78" d="M0 6h8v18H2a2 2 0 0 1-2-2z"/><path fill="#ffb000" d="M8 0h12a2 2 0 0 1 2 2v10H8z"/><path fill="#0a84ff" d="M16 12h8v10a2 2 0 0 1-2 2h-8z"/><rect x="3.500" y="3.500" width="17" height="17" fill="#000"/><text class="rider-text" x="5.500" y="11.500">RD</text><rect x="6" y="16" width="6" height="1.400" fill="#fff"/></svg></span>
            <span class="task"><svg viewBox="0 0 24 24"><path fill="#dfe8ee" d="M1 14C1 8 6 5 12 5s11 4 10 10c-.5 3-3 3-5 3-3 0-2 4-6 4-5 0-10-3-10-8z"/><circle cx="6" cy="12" r="2" fill="#e53935"/><circle cx="11" cy="9" r="2" fill="#43a047"/><circle cx="6" cy="17" r="2" fill="#1e88e5"/><path fill="#c8964e" d="M13 18 20 3l2 1-6 14z"/><path fill="#8a8f96" d="M20 3l1-3 2 1-1 3z"/></svg></span>
        </div>
        <div class="tray">
            <svg class="tray-up" viewBox="0 0 16 16"><path fill="none" stroke="#fff" stroke-width="1.200" d="M2 11l6-6 6 6"/></svg>
            <svg class="tray-net" viewBox="0 0 18 18"><path fill="none" stroke="#fff" stroke-width="1.200" d="M1 3.500 16.500 1v13L1 15z"/><path fill="none" stroke="#fff" d="M5 10a3.500 3.500 0 0 1 6-3M12 8a3.500 3.500 0 0 1-6 3"/><circle cx="14" cy="13.500" r="3.500" fill="#ff8c00"/></svg>
            <span class="tray-lang">ESP</span>
            <div class="clock"><span>19:28</span><span>9/07/2025</span></div>
            <svg class="tray-notif" viewBox="0 0 18 18"><path fill="none" stroke="#fff" stroke-width="1.200" d="M1 2h16v12h-5.500L9 16.500 6.500 14H1z"/></svg>
            <span class="show-desktop"></span>
        </div>
    </footer>
</body>
</html>
```

FILE: styles.css
```css
* {
    box-sizing: border-box;
}
html, body {
    height: 100%;
}
body {
    margin: 0;
    width: 1440px;
    height: 900px;
    overflow: hidden;
    display: flex;
    flex-direction: column;
    font-family: Roboto, Arial, sans-serif;
    background-color: #f8fafd;
    color: #1f1f1f;
}
svg {
    flex-shrink: 0;
    display: block;
}
.sprite {
    width: 0;
    height: 0;
    position: absolute;
}

/* pestañas */
.tabstrip {
    height: 40px;
    flex-shrink: 0;
    display: flex;
    align-items: flex-start;
    padding: 5px 0 0 1px;
    background-color: #1e1e26;
    color: #b9b9bd;
    font-family: "Noto Sans", "Open Sans", sans-serif;
    font-size: 11.3px;
}
.tab {
    width: 205px;
    height: 30px;
    display: flex;
    align-items: center;
    padding-left: 14px;
    border-right: 1px solid #3c3c44;
    white-space: nowrap;
}
.tab:nth-child(5) {
    border-right: none;
}
.tab-icon {
    width: 16px;
    height: 16px;
    margin-right: 8px;
}
.tab:first-child .tab-icon {
    margin-right: 9px;
}
.tab-icon-m {
    height: 12px;
}
.tab-title {
    padding-bottom: 2px;
}
.tab-fade {
    -webkit-mask-image: linear-gradient(to right, #000 85%, transparent);
    mask-image: linear-gradient(to right, #000 85%, transparent);
}
.tab-active {
    width: 200px;
    height: 31px;
    padding-left: 12px;
    border: none;
    border-radius: 8px;
    background-color: #3a3a40;
    color: #f1f1f3;
}
.tab-active .tab-title {
    width: 131px;
}
.tab-close {
    width: 9px;
    height: 9px;
    margin-left: 12px;
    color: #f1f1f3;
}
.new-tab {
    width: 12px;
    height: 12px;
    margin: 9px 0 0 15px;
    color: #d0d0d3;
}
.win-controls {
    margin-left: auto;
    display: flex;
    gap: 30px;
    padding: 7px 15px 0 0;
    color: #e6e6e8;
}
.win-btn {
    width: 16px;
    height: 16px;
}

/* barra de dirección */
.toolbar {
    height: 40px;
    flex-shrink: 0;
    display: flex;
    align-items: center;
    padding-left: 12px;
    background-color: #3a3a40;
}
.nav-btn {
    width: 20px;
    height: 20px;
    margin-right: 10px;
}
.bookmark-btn {
    margin-left: 125px;
    margin-right: 13px;
}
.urlbar {
    width: 622px;
    height: 32px;
    display: flex;
    align-items: center;
    padding-left: 9px;
    border-radius: 10px;
    background-color: #25252b;
    color: #d8d8dc;
    font-family: "Noto Sans", "Open Sans", sans-serif;
    font-size: 12.8px;
}
.url-tune {
    width: 14px;
    height: 14px;
}
.url-text {
    width: 434px;
    flex-shrink: 0;
    margin-left: 15px;
    white-space: nowrap;
}
.url-zoom {
    width: 16px;
    height: 16px;
    margin-left: 18px;
}
.url-share {
    width: 17px;
    height: 17px;
    margin-left: 18px;
}
.url-sep {
    width: 1px;
    height: 16px;
    margin: 0 8px 0 8px;
    background-color: #77777c;
}
.shield-wrap {
    position: relative;
    width: 35px;
    height: 20px;
    flex-shrink: 0;
}
.shield-wrap-last {
    width: 24px;
}
.shield {
    width: 18px;
    height: 18px;
    margin-top: 1px;
}
.ext-badge {
    position: absolute;
    top: -2px;
    left: 12px;
    width: 12px;
    height: 12px;
    border-radius: 50%;
    font-size: 7px;
    font-weight: 700;
    line-height: 12px;
    text-align: center;
    color: #fff;
}
.badge-gray {
    background-color: #6a6a72;
}
.badge-red {
    left: 11px;
    background-color: #e8412c;
}
.extensions {
    display: flex;
    align-items: center;
    margin-left: 89px;
}
.ext {
    width: 18px;
    height: 18px;
    margin-right: 12px;
}
.toolbar-sep {
    width: 1px;
    height: 20px;
    margin: 0 14px 0 3px;
    background-color: #1f1f24;
}

/* marcadores */
.bookmarks {
    height: 35px;
    flex-shrink: 0;
    display: flex;
    align-items: center;
    padding: 0 0 5px 17px;
    background-color: #3a3a40;
    color: #e6e6e8;
    font-family: "Noto Sans", "Open Sans", sans-serif;
    font-size: 11.2px;
    white-space: nowrap;
}
.bm-apps {
    width: 18px;
    height: 18px;
}
.bm-sep {
    width: 1px;
    height: 18px;
    margin: 0 14px 0 13px;
    background-color: #1f1f24;
}
.bm-sep-right {
    margin: 0 14px 0 auto;
}
.bm {
    display: flex;
    align-items: center;
    margin-right: 16.5px;
    padding-bottom: 2px;
}
.bm:last-child {
    margin-right: 14px;
}
.bm-icon {
    width: 16px;
    height: 16px;
    margin: 2px 6px 0 0;
}

/* gmail */
.gmail {
    flex: 1;
    min-height: 0;
    display: flex;
    flex-direction: column;
}
.gm-top {
    height: 48px;
    flex-shrink: 0;
    display: flex;
    align-items: center;
}
.ic {
    width: 16px;
    height: 16px;
    fill: #444746;
    color: #444746;
}
.gm-brand {
    width: 192px;
    display: flex;
    align-items: center;
    padding-left: 19px;
}
.ic-menu {
    width: 16px;
    height: 16px;
}
.gm-logo {
    width: 24px;
    height: 18px;
    margin-left: 13px;
}
.gm-word {
    margin-left: 7px;
    font-family: "Open Sans", sans-serif;
    font-size: 15.6px;
    color: #5f6368;
}
.gm-search {
    width: 540px;
    height: 36px;
    display: flex;
    align-items: center;
    padding: 0 12px 0 10px;
    border-radius: 18px;
    background-color: #e9eef6;
    font-size: 12px;
    letter-spacing: 0.2px;
    color: #444746;
}
.gm-search-text {
    margin-left: 7px;
    flex: 1;
}
.ic-tune {
    width: 18px;
    height: 18px;
}
.gm-account {
    margin-left: auto;
    display: flex;
    align-items: center;
    padding-right: 13px;
}
.ic-help {
    fill: #80868b;
    margin-right: 17px;
}
.ic-gear {
    margin-right: 17px;
    color: #5f6368;
    fill: #5f6368;
}
.ic-apps {
    width: 14px;
    height: 14px;
    margin-right: 17px;
    margin-left: 1px;
    fill: #5f6368;
}
.avatar {
    width: 24px;
    height: 24px;
    border-radius: 50%;
    background-color: #5c6bc0;
    color: #fff;
    font-size: 12px;
    font-weight: 500;
    line-height: 24px;
    text-align: center;
}
.gm-body {
    flex: 1;
    min-height: 0;
    display: flex;
    padding-bottom: 12px;
}

/* menú lateral */
.sidebar {
    width: 192px;
    flex-shrink: 0;
    display: flex;
    flex-direction: column;
    font-size: 11.2px;
}
.compose {
    width: 106px;
    height: 42px;
    display: flex;
    align-items: center;
    gap: 13px;
    margin: 6px 0 0 6px;
    padding-left: 13px;
    border-radius: 14px;
    background-color: #c2e7ff;
    color: #001d35;
}
.compose span {
    padding-bottom: 2px;
    letter-spacing: 0.05px;
}
.ic-edit {
    width: 16px;
    height: 16px;
    fill: #001d35;
}
.nav {
    margin-top: 12px;
}
.nav-item {
    width: 180px;
    height: 24px;
    display: flex;
    align-items: center;
    padding: 0 9px 0 20px;
    border-radius: 0 12px 12px 0;
    color: #202124;
}
.nav-item .ic {
    width: 14px;
    height: 14px;
    margin-right: 14px;
}
.nav-label {
    flex: 1;
}
.nav-active {
    background-color: #d3e3fd;
    color: #041e49;
    font-weight: 500;
    letter-spacing: 0.2px;
}
.nav-active .ic {
    fill: #041e49;
}
.nav-count {
    font-size: 9px;
    font-weight: 700;
}
.labels-head {
    width: 180px;
    height: 18px;
    display: flex;
    align-items: center;
    justify-content: space-between;
    margin-top: 19px;
    padding: 0 6px 0 20px;
    font-size: 12.4px;
    font-weight: 500;
    letter-spacing: 0.1px;
}
.labels-head .ic {
    width: 15px;
    height: 15px;
}
.update-pill {
    width: 163px;
    height: 23px;
    display: flex;
    align-items: center;
    margin: auto 0 0 14px;
    padding: 0 10px 0 13px;
    border-radius: 12px;
    background-color: #fff;
}
.update-num {
    width: 14px;
    height: 14px;
}
.update-text {
    flex: 1;
    margin-left: 12px;
}
.update-arrow {
    width: 14px;
    height: 14px;
    fill: #1f1f1f;
}

/* correo */
.card {
    flex: 1;
    min-width: 0;
    border-radius: 12px;
    background-color: #fff;
}
.tool {
    width: 24px;
    height: 24px;
    padding: 0;
    fill: #444746;
    transform: scale(0.58);
}
.mail-toolbar {
    height: 36px;
    display: flex;
    align-items: center;
    padding: 0 20px 0 8px;
}
.tool-first {
    margin-left: 17px;
}
.mail-toolbar .tool {
    margin-right: 9px;
}
.tool-sep {
    width: 1px;
    height: 14px;
    margin: 0 10px 0 1px;
    background-color: #e3e3e3;
}
.mail-toolbar .tool-back {
    margin-right: 0;
}
.mail-toolbar .tool-more {
    margin: 0 0 0 -3px;
}
.pager {
    margin: 0 10px 0 auto;
    font-size: 9px;
    color: #444746;
}
.mail-toolbar .tool-dim {
    margin-right: 6px;
    fill: #b3b5b8;
}
.mail-toolbar .tool:last-child {
    margin-right: 0;
}
.subject-row {
    height: 49px;
    display: flex;
    align-items: center;
    padding: 0 19px 0 54px;
}
.subject {
    margin: 0;
    font-family: "Open Sans", sans-serif;
    font-size: 16.6px;
    font-weight: 400;
    color: #1f1f1f;
}
.label-chip {
    height: 13px;
    margin: 1px 0 0 8px;
    padding: 0 5px 0 4px;
    border-radius: 2px;
    background-color: #dddddd;
    font-size: 8.6px;
    line-height: 13px;
    white-space: nowrap;
    color: #444746;
}
.label-chip b {
    font-weight: 400;
}
.tool-print {
    margin: 3px 3px 0 auto;
}
.tool-open {
    margin-top: 3px;
}
.msg-head {
    display: flex;
    align-items: flex-start;
    padding: 1px 20px 0 12px;
}
.msg-avatar {
    width: 30px;
    height: 30px;
    margin-right: 12px;
    padding: 7px;
    border-radius: 50%;
    background-color: #f1f1f1;
    fill: #d2d2d2;
}
.msg-from {
    flex: 1;
}
.msg-name {
    padding-top: 1px;
    font-size: 11.2px;
    font-weight: 500;
    letter-spacing: 0.43px;
    line-height: 16px;
    color: #1f1f1f;
}
.msg-to {
    font-size: 8.5px;
    letter-spacing: 0.3px;
    line-height: 12px;
    color: #5e5e5e;
}
.caret {
    display: inline-block;
    margin-left: 2px;
    border: 3px solid transparent;
    border-top: 3px solid #5e5e5e;
    vertical-align: -2px;
}
.msg-time {
    margin: 2px 10px 0 0;
    font-size: 8.8px;
    line-height: 12px;
    color: #5e5e5e;
}
.msg-head .tool {
    margin-left: 6px;
    margin-top: -4px;
}
.msg-head .msg-time + .tool {
    margin-left: 0;
}
.msg-title {
    margin: 37px 0 0 69px;
    font-family: "Liberation Sans", Arial, sans-serif;
    font-size: 20px;
    font-weight: 700;
    letter-spacing: -0.09px;
    line-height: 24px;
    color: #2c2c2c;
}
.msg-body {
    margin: 17px 0 0 69px;
    font-size: 9px;
    letter-spacing: 0.72px;
    line-height: 12px;
    color: #5e5e5e;
}
.actions {
    display: flex;
    align-items: center;
    margin: 55px 0 0 54px;
}
.act-btn {
    height: 27px;
    display: flex;
    align-items: center;
    padding-bottom: 2px;
    border: 1px solid #747775;
    border-radius: 14px;
    font-size: 11.4px;
    letter-spacing: 0.2px;
    color: #444746;
}
.act-btn .ic {
    width: 13px;
    height: 13px;
    margin-top: 2px;
}
.act-reply {
    width: 100px;
    padding-left: 11px;
    gap: 6px;
}
.act-forward {
    width: 88px;
    margin-left: 6px;
    padding-left: 11px;
    gap: 6px;
}
.act-emoji {
    width: 27px;
    height: 27px;
    display: flex;
    align-items: center;
    justify-content: center;
    margin-left: 6px;
    border: 1px solid #747775;
    border-radius: 50%;
}
.act-emoji .ic {
    width: 15px;
    height: 15px;
}
.act-ai {
    width: 102px;
    height: 26px;
    display: flex;
    align-items: center;
    gap: 4px;
    margin-left: 18px;
    padding-left: 10px;
    border-radius: 13px;
    background-color: #f1f5fd;
    font-size: 11px;
    color: #0b57d0;
}
.act-ai span {
    padding-top: 1px;
}
.ai-icon {
    width: 13px;
    height: 13px;
}
.act-more {
    width: 14px;
    height: 14px;
    margin-left: 11px;
    fill: #c4c7c5;
}

/* panel derecho */
.rail {
    width: 42px;
    flex-shrink: 0;
    display: flex;
    flex-direction: column;
    align-items: center;
    padding-top: 14px;
}
.rail-app {
    width: 16px;
    height: 16px;
    margin-bottom: 26px;
}
.rail-cal {
    font-family: Roboto, Arial, sans-serif;
    font-size: 6px;
    fill: #4285f4;
}
.rail-sep {
    width: 16px;
    height: 1px;
    margin-top: -1px;
    background-color: #dfe1e5;
}
.rail-add {
    width: 15px;
    height: 15px;
    margin-top: 25px;
    fill: #1f1f1f;
}
.rail-toggle {
    width: 14px;
    height: 14px;
    margin-top: auto;
    margin-bottom: 3px;
    fill: #1f1f1f;
}

/* barra de tareas */
.taskbar {
    height: 40px;
    flex-shrink: 0;
    display: flex;
    align-items: center;
    background-color: #262626;
    color: #fff;
    font-family: "Noto Sans", "Open Sans", sans-serif;
    font-size: 11px;
}
.win-logo {
    width: 16px;
    height: 16px;
    margin-left: 15px;
}
.task-view {
    width: 18px;
    height: 18px;
    margin-left: 32px;
}
.task-apps {
    display: flex;
    margin-left: 17px;
}
.task {
    width: 49px;
    height: 40px;
    display: flex;
    align-items: center;
    justify-content: center;
}
.task svg {
    width: 24px;
    height: 24px;
}
.task:nth-child(n+9) {
    background: linear-gradient(#9a9a9a, #9a9a9a) center bottom / 40px 2px no-repeat;
}
.task:nth-child(n+9).task-active {
    background: linear-gradient(#9a9a9a, #9a9a9a) center bottom / 48px 2px no-repeat, #3a3a3a;
}
.rider-text {
    font-family: "Liberation Sans", sans-serif;
    font-size: 7px;
    font-weight: 700;
    fill: #fff;
}
.tray {
    margin-left: auto;
    display: flex;
    align-items: center;
}
.tray-up {
    width: 13px;
    height: 13px;
}
.tray-net {
    width: 18px;
    height: 18px;
    margin-left: 9px;
}
.tray-lang {
    margin-left: 10px;
    font-size: 11.5px;
}
.clock {
    width: 66px;
    display: flex;
    flex-direction: column;
    align-items: center;
    gap: 2px;
    margin: -1px 0 0 11px;
    line-height: 15px;
}
.tray-notif {
    width: 18px;
    height: 18px;
    margin-left: 13px;
}
.show-desktop {
    width: 1px;
    height: 40px;
    margin-left: 18px;
    margin-right: 5px;
    background-color: #6f6f6f;
}
```
